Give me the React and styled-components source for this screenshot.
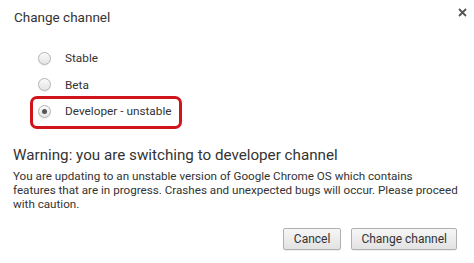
import React from 'react';
import styled, { createGlobalStyle, css } from 'styled-components';

const GlobalStyle = createGlobalStyle`
  body {
    margin: 0;
    background: #ffffff;
    font-family: Roboto, "Liberation Sans", sans-serif;
    color: #333333;
  }
`;

const Dialog = styled.div`
  width: 474px;
  height: 263px;
  box-sizing: border-box;
  padding: 0 13px;
  display: flex;
  flex-direction: column;
  overflow: hidden;
`;

const Header = styled.div`
  display: flex;
  justify-content: space-between;
  align-items: flex-start;
  padding-top: 9px;
  height: 45px;
  box-sizing: border-box;
`;

const Title = styled.div`
  font-size: 13.5px;
  line-height: 17px;
  color: #333333;
  margin-left: 1px;
`;

const CloseButton = styled.button`
  border: none;
  background: none;
  padding: 0;
  margin: -5px -9px 0 0;
  width: 16px;
  height: 16px;
  display: flex;
  align-items: center;
  justify-content: center;
  cursor: pointer;
`;

const RadioList = styled.div`
  display: flex;
  flex-direction: column;
  padding-left: 25px;
`;

const RadioRow = styled.label`
  position: relative;
  display: flex;
  align-items: center;
  height: 26.5px;
  gap: 14px;
  font-size: 11.8px;
  color: #333333;
  ${(p) =>
    p.$highlighted &&
    css`
      &::after {
        content: '';
        position: absolute;
        left: -8px;
        top: -2px;
        width: 152px;
        height: 33px;
        box-sizing: border-box;
        border: 3px solid #d0141c;
        border-radius: 7px;
      }
    `}
`;

const RadioCircle = styled.span`
  width: 13px;
  height: 13px;
  border-radius: 50%;
  box-sizing: border-box;
  border: 1px solid #b4b4b4;
  background: linear-gradient(#fafafa, #e4e4e4);
  box-shadow: 0 1px 1px rgba(0, 0, 0, 0.08);
  display: flex;
  align-items: center;
  justify-content: center;
  ${(p) =>
    p.$checked &&
    css`
      &::before {
        content: '';
        width: 5px;
        height: 5px;
        border-radius: 50%;
        background: #555555;
      }
    `}
`;

const WarningTitle = styled.div`
  margin-top: 21px;
  font-size: 15.2px;
  line-height: 19px;
  color: #333333;
`;

const WarningText = styled.p`
  margin: 4px 0 0;
  font-size: 11.65px;
  line-height: 14px;
  color: #333333;
  white-space: nowrap;
`;

const Footer = styled.div`
  margin-top: auto;
  margin-bottom: 13px;
  margin-right: 4px;
  display: flex;
  justify-content: flex-end;
  gap: 10px;
`;

const Button = styled.button`
  font-family: Roboto, "Liberation Sans", sans-serif;
  font-size: 12px;
  color: #333333;
  height: 22px;
  padding: 0 ${(p) => (p.$wide ? 9 : 10)}px;
  min-width: 56px;
  border: 1px solid #b0b0b0;
  border-radius: 2px;
  background: linear-gradient(#f6f6f6, #e2e2e2);
  box-shadow: 0 1px 0 rgba(0, 0, 0, 0.06);
  cursor: pointer;
`;

const channels = [
  { label: 'Stable' },
  { label: 'Beta' },
  { label: 'Developer - unstable', checked: true },
];

const App = () => {
  return (
    <>
      <GlobalStyle />
      <Dialog>
        <Header>
          <Title>Change channel</Title>
          <CloseButton aria-label="close">
            <svg width="9" height="9" viewBox="0 0 9 9">
              <path d="M1 1 L8 8 M8 1 L1 8" stroke="#555" strokeWidth="1.8" />
            </svg>
          </CloseButton>
        </Header>
        <RadioList>
          {channels.map((c) => (
            <RadioRow key={c.label} $highlighted={c.checked}>
              <RadioCircle $checked={c.checked} />
              {c.label}
            </RadioRow>
          ))}
        </RadioList>
        <WarningTitle>Warning: you are switching to developer channel</WarningTitle>
        <WarningText>
          You are updating to an unstable version of Google Chrome OS which contains
          <br />
          features that are in progress. Crashes and unexpected bugs will occur. Please proceed
          <br />
          with caution.
        </WarningText>
        <Footer>
          <Button>Cancel</Button>
          <Button $wide>Change channel</Button>
        </Footer>
      </Dialog>
    </>
  );
};

export default App;
